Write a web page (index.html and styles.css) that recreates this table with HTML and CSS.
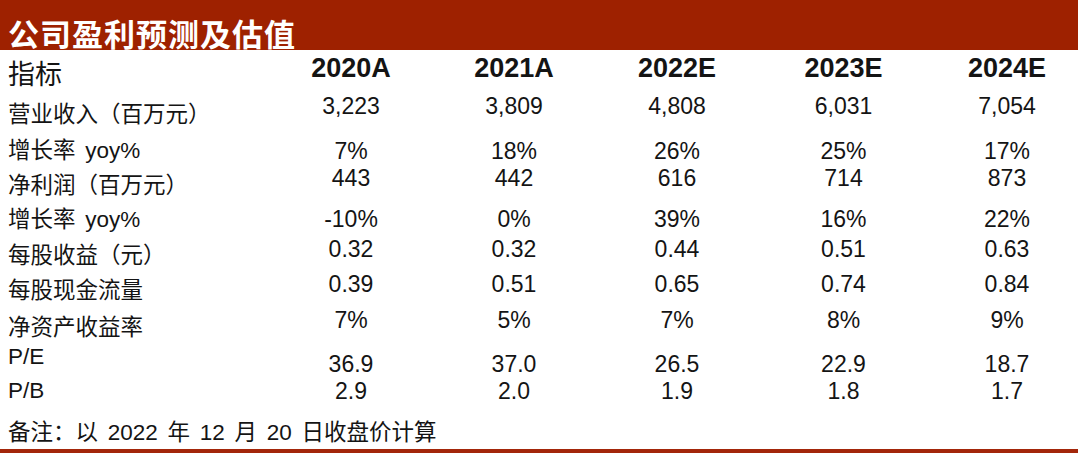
FILE: index.html
```html
<!DOCTYPE html>
<html lang="zh-CN">
<head>
<meta charset="utf-8">
<title>公司盈利预测及估值</title>
<link rel="stylesheet" href="styles.css">
</head>
<body>
<div class="page">
  <div class="titlebar"><h1 class="title">公司盈利预测及估值</h1></div>
  <div class="table">
    <div class="row r0">
      <div class="lab head-lab">指标</div>
      <div class="val yr">2020A</div><div class="val yr">2021A</div><div class="val yr">2022E</div><div class="val yr">2023E</div><div class="val yr">2024E</div>
    </div>
    <div class="row r1">
      <div class="lab">营业收入（百万元）</div>
      <div class="val">3,223</div><div class="val">3,809</div><div class="val">4,808</div><div class="val">6,031</div><div class="val">7,054</div>
    </div>
    <div class="row r2">
      <div class="lab">增长率 yoy%</div>
      <div class="val">7%</div><div class="val">18%</div><div class="val">26%</div><div class="val">25%</div><div class="val">17%</div>
    </div>
    <div class="row r3">
      <div class="lab">净利润（百万元）</div>
      <div class="val">443</div><div class="val">442</div><div class="val">616</div><div class="val">714</div><div class="val">873</div>
    </div>
    <div class="row r4">
      <div class="lab">增长率 yoy%</div>
      <div class="val">-10%</div><div class="val">0%</div><div class="val">39%</div><div class="val">16%</div><div class="val">22%</div>
    </div>
    <div class="row r5">
      <div class="lab">每股收益（元）</div>
      <div class="val">0.32</div><div class="val">0.32</div><div class="val">0.44</div><div class="val">0.51</div><div class="val">0.63</div>
    </div>
    <div class="row r6">
      <div class="lab">每股现金流量</div>
      <div class="val">0.39</div><div class="val">0.51</div><div class="val">0.65</div><div class="val">0.74</div><div class="val">0.84</div>
    </div>
    <div class="row r7">
      <div class="lab">净资产收益率</div>
      <div class="val">7%</div><div class="val">5%</div><div class="val">7%</div><div class="val">8%</div><div class="val">9%</div>
    </div>
    <div class="row r8">
      <div class="lab">P/E</div>
      <div class="val">36.9</div><div class="val">37.0</div><div class="val">26.5</div><div class="val">22.9</div><div class="val">18.7</div>
    </div>
    <div class="row r9">
      <div class="lab">P/B</div>
      <div class="val">2.9</div><div class="val">2.0</div><div class="val">1.9</div><div class="val">1.8</div><div class="val">1.7</div>
    </div>
  </div>
  <div class="note">备注：以 2022 年 12 月 20 日收盘价计算</div>
  <div class="bottomline"></div>
</div>
</body>
</html>
```

FILE: styles.css
```css
html, body {
  margin: 0;
  padding: 0;
  background: #ffffff;
  overflow: hidden;
}

.page {
  width: 1080px;
  height: 455px;
  font-family: "Liberation Sans", "Noto Sans CJK SC", sans-serif;
  color: #141414;
}

.titlebar {
  width: 1078px;
  height: 50px;
  box-sizing: border-box;
  background: #9e2100;
  padding: 15px 0 0 8px;
}

.title {
  margin: 0;
  font-family: "Noto Sans CJK SC", "Liberation Sans", sans-serif;
  font-weight: 700;
  font-size: 31px;
  line-height: 36px;
  letter-spacing: 1px;
  color: #ffffff;
}

.table {
  width: 1085px;
}

.row {
  display: grid;
  grid-template-columns: 270px 162px 164px 162px 171px 156px;
  align-items: start;
}

.lab {
  padding-left: 8px;
  font-size: 22.5px;
  line-height: 26px;
  word-spacing: 3.5px;
  white-space: nowrap;
}

.val {
  text-align: center;
  font-size: 23px;
  line-height: 26px;
  white-space: nowrap;
}

.head-lab {
  font-size: 27px;
  line-height: 30px;
}

.yr {
  font-weight: 700;
  font-size: 27px;
  line-height: 30px;
}

.r0 { height: 42px; }
.r0 .lab { padding-top: 10px; }
.r0 .val { padding-top: 3px; }

.r1 { height: 40px; }
.r1 .lab { padding-top: 10px; }
.r1 .val { padding-top: 1px; }

.r2 { height: 32px; }
.r2 .lab { padding-top: 6px; }
.r2 .val { padding-top: 6px; }

.r3 { height: 35px; }
.r3 .lab { padding-top: 9px; }
.r3 .val { padding-top: 1px; }

.r4 { height: 36px; }
.r4 .lab { padding-top: 8px; }
.r4 .val { padding-top: 7px; }

.r5 { height: 35px; }
.r5 .lab { padding-top: 8px; }
.r5 .val { padding-top: 1px; }

.r6 { height: 36px; }
.r6 .lab { padding-top: 8px; }
.r6 .val { padding-top: 1px; }

.r7 { height: 36px; }
.r7 .lab { padding-top: 9px; }
.r7 .val { padding-top: 1px; }

.r8 { height: 34px; }
.r8 .lab { padding-top: 2px; }
.r8 .val { padding-top: 9px; }

.r9 { height: 34px; }
.r9 .lab { padding-top: 2px; }
.r9 .val { padding-top: 2px; }

.note {
  height: 39px;
  box-sizing: border-box;
  padding: 10px 0 0 8px;
  font-size: 22.5px;
  line-height: 26px;
  word-spacing: 3.5px;
  white-space: nowrap;
}

.bottomline {
  width: 1078px;
  height: 4px;
  background: #a3260a;
}
```
